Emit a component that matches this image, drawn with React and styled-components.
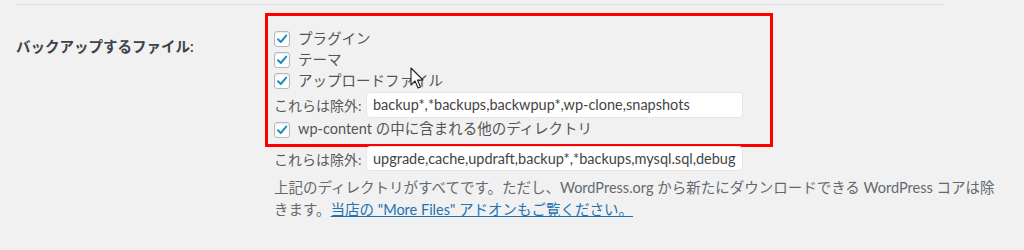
import React from "react";
import styled, { createGlobalStyle } from "styled-components";

const GlobalStyle = createGlobalStyle`
  html, body {
    margin: 0;
    padding: 0;
    background: #f1f1f1;
  }
  body {
    font-family: Lato, "Noto Sans CJK JP", sans-serif;
    font-size: 14.5px;
    color: #50575e;
  }
`;

const Page = styled.div`
  position: relative;
  width: 1024px;
  height: 250px;
  padding: 4px 0 0 16px;
  box-sizing: border-box;
  overflow: hidden;
`;

const Divider = styled.div`
  width: 927px;
  height: 1px;
  background: #dcdcde;
`;

const FormRow = styled.div`
  display: grid;
  grid-template-columns: 249px 1fr;
  align-items: start;
`;

const RowLabel = styled.div`
  padding-top: 32px;
  line-height: 20px;
  font-size: 14.5px;
  font-weight: 600;
  color: #3c434a;
`;

const Field = styled.div`
  padding-top: 8px;
  display: flex;
  flex-direction: column;
`;

const Highlight = styled.div`
  width: 508px;
  box-sizing: border-box;
  border: 3px solid #ff0000;
  padding: 12px 0 4px 6px;
  display: flex;
  flex-direction: column;
`;

const CheckRow = styled.label`
  display: flex;
  align-items: center;
  gap: 8px;
  height: ${({ $h }) => $h || 21}px;
  padding-top: 1px;
  box-sizing: border-box;
  line-height: 1;
  color: #555;
`;

const Box = styled.span`
  width: 14px;
  height: 14px;
  border: 1px solid #b4b9be;
  border-radius: 3px;
  background: #fff;
  box-shadow: inset 0 1px 2px rgba(0, 0, 0, 0.1);
  display: flex;
  align-items: center;
  justify-content: center;
  flex-shrink: 0;
`;

const ExcludeRow = styled.div`
  display: flex;
  align-items: center;
  height: ${({ $h }) => $h}px;
  margin-top: ${({ $mt }) => $mt || 0}px;
  padding-left: ${({ $pl }) => $pl || 0}px;
  color: #5a5a5a;
`;

const ExcludeLabel = styled.span`
  width: 92px;
  flex-shrink: 0;
  font-size: 14px;
`;

const TextInput = styled.div`
  width: 377px;
  height: ${({ $h }) => $h}px;
  box-sizing: border-box;
  background: #fff;
  border: 1px solid #e6e6e6;
  border-radius: 4px;
  padding: 0 6px;
  display: flex;
  align-items: center;
  font-size: 14.5px;
  color: #444;
  white-space: nowrap;
  overflow: hidden;
`;

const Description = styled.p`
  margin: 6px 0 0 9px;
  width: 725px;
  line-height: 22px;
  font-size: 14.5px;
  color: #646970;
`;

const MoreLink = styled.a`
  color: #2271b1;
  text-decoration: underline;
`;

const Cursor = styled.svg`
  position: absolute;
  left: 410px;
  top: 67px;
`;

const Check = () => (
  <Box>
    <svg width="12" height="12" viewBox="0 0 12 12">
      <path d="M2 6.2 L4.8 9 L10.2 2.6" fill="none" stroke="#1e8cbe" strokeWidth="2" strokeLinecap="round" strokeLinejoin="round" />
    </svg>
  </Box>
);

export default function App() {
  return (
    <>
      <GlobalStyle />
      <Page>
        <Divider />
        <FormRow>
          <RowLabel>バックアップするファイル:</RowLabel>
          <Field>
            <Highlight>
              <CheckRow>
                <Check />
                プラグイン
              </CheckRow>
              <CheckRow>
                <Check />
                テーマ
              </CheckRow>
              <CheckRow>
                <Check />
                アップロードファイル
              </CheckRow>
              <ExcludeRow $h={27}>
                <ExcludeLabel>これらは除外:</ExcludeLabel>
                <TextInput $h={26}>backup*,*backups,backwpup*,wp-clone,snapshots</TextInput>
              </ExcludeRow>
              <CheckRow $h={22}>
                <Check />
                wp-content の中に含まれる他のディレクトリ
              </CheckRow>
            </Highlight>
            <ExcludeRow $h={25} $mt={-1} $pl={9}>
              <ExcludeLabel>これらは除外:</ExcludeLabel>
              <TextInput $h={25}>upgrade,cache,updraft,backup*,*backups,mysql.sql,debug</TextInput>
            </ExcludeRow>
            <Description>
              上記のディレクトリがすべてです。ただし、WordPress.org から新たにダウンロードできる WordPress コアは除きます。
              <MoreLink href="#">当店の "More Files" アドオンもご覧ください。</MoreLink>
            </Description>
          </Field>
        </FormRow>
        <Cursor width="16" height="24" viewBox="0 0 16 24">
          <path d="M1 1 L1 18 L5 14 L8 21 L10.5 20 L7.5 13 L13 13 Z" fill="#fff" stroke="#222" strokeWidth="1.1" strokeLinejoin="round" />
        </Cursor>
      </Page>
    </>
  );
}
